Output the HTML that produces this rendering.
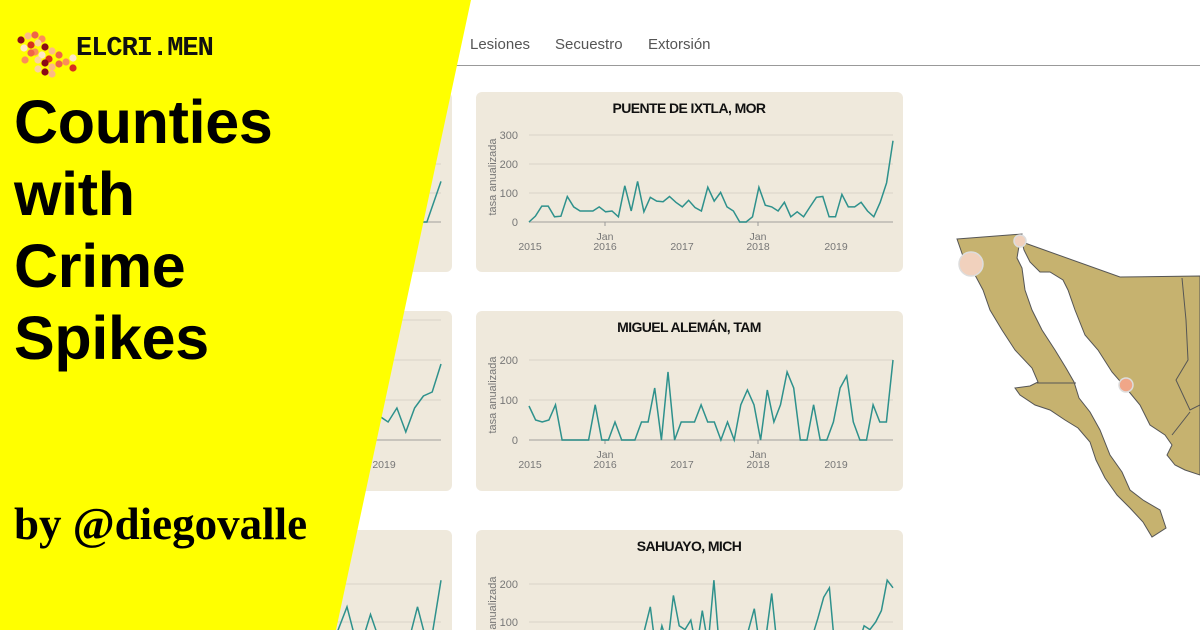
<!DOCTYPE html>
<html><head><meta charset="utf-8"><style>
*{margin:0;padding:0;box-sizing:border-box}
html,body{width:1200px;height:630px;overflow:hidden}
body{background:#fff;position:relative;font-family:"Liberation Sans",sans-serif}
.nav{position:absolute;top:36px;font-size:15px;color:#555}
.hr{position:absolute;left:440px;top:65px;width:760px;height:1px;background:#999}
.card{position:absolute;background:#efe9dc;border-radius:6px}
svg{position:absolute;left:0;top:0}
.yellow{position:absolute;left:0;top:0}
.logo{position:absolute;left:76px;top:34px;font-family:"Liberation Mono",monospace;font-weight:bold;font-size:27px;color:#111;letter-spacing:-1px}
.title{position:absolute;left:14px;top:86px;font-weight:bold;font-size:61px;line-height:72px;color:#000;letter-spacing:-0.3px}
.by{position:absolute;left:14px;top:498px;font-family:"Liberation Serif",serif;font-weight:bold;font-size:45px;color:#000}
</style></head><body>
<div class="nav" style="left:470px">Lesiones</div>
<div class="nav" style="left:555px">Secuestro</div>
<div class="nav" style="left:648px">Extorsión</div>
<div class="hr"></div>
<div class="card" style="left:300px;top:92px;width:152px;height:180px"></div>
<div class="card" style="left:300px;top:311px;width:152px;height:180px"></div>
<div class="card" style="left:300px;top:530px;width:152px;height:100px;border-radius:6px 6px 0 0"></div>
<div class="card" style="left:476px;top:92px;width:427px;height:180px"></div>
<div class="card" style="left:476px;top:311px;width:427px;height:180px"></div>
<div class="card" style="left:476px;top:530px;width:427px;height:100px;border-radius:6px 6px 0 0"></div>
<svg id="ch" width="1200" height="630" font-family="Liberation Sans, sans-serif">
</svg>
<svg width="1200" height="630">
<g fill="#c6b26f" stroke="#555" stroke-width="1">
<path d="M957,239 L1022,234 L1019,246 L1017,258 L1022,268 L1025,290 L1032,310 L1042,330 L1055,350 L1066,368 L1074,382 L1079,398 L1090,412 L1100,430 L1110,455 L1122,472 L1130,490 L1143,500 L1160,510 L1166,528 L1152,537 L1143,522 L1130,508 L1117,495 L1105,478 L1096,460 L1090,442 L1078,428 L1065,420 L1050,410 L1035,405 L1020,395 L1015,388 L1030,386 L1038,382 L1032,368 L1015,350 L1002,330 L990,310 L983,290 L975,275 L965,262 Z"/>
<path d="M1022,242 L1120,277 L1200,276 L1200,475 L1185,470 L1175,465 L1167,455 L1172,445 L1165,435 L1150,425 L1140,405 L1126,388 L1112,372 L1098,350 L1085,335 L1075,310 L1068,290 L1063,280 L1050,272 L1040,272 L1030,262 L1024,250 Z"/>
<path d="M1037,383 L1076,383" fill="none"/>
<path d="M1182,278 L1186,320 L1188,360 L1176,380 L1190,410 L1200,405" fill="none"/>
<path d="M1172,435 L1190,412" fill="none"/>
</g>
<g stroke="#ddd" stroke-width="1.5">
<circle cx="971" cy="264" r="12" fill="#f1d1bd"/>
<circle cx="1020" cy="241" r="6" fill="#f1d1bd"/>
<circle cx="1126" cy="385" r="7" fill="#f0a688"/>
</g>
</svg>
<svg class="yellow" width="1200" height="630"><polygon points="0,0 471,0 336,630 0,630" fill="#ffff00"/></svg>
<svg width="70" height="70" style="left:12px;top:28px" id="logo"></svg>
<div class="logo">ELCRI.MEN</div>
<div class="title">Counties<br>with<br>Crime<br>Spikes</div>
<div class="by">by @diegovalle</div>
<script>
const ch=document.getElementById('ch');
let s='';
function chart(top,title,vals,y0,ppu,ticks,left){
 const x0=left?300:529,x1=left?441:893;
 if(!left)s+=`<text x="689" y="${top+21}" text-anchor="middle" font-size="14" font-weight="bold" fill="#111" letter-spacing="-0.6">${title}</text>`;
 ticks.forEach(t=>{const y=y0-t*ppu;s+=`<line x1="${x0}" x2="${x1}" y1="${y}" y2="${y}" stroke="${t==0?'#c8c4bc':'#d8d3c8'}" stroke-width="${t==0?2:1}"/>`;
  if(!left)s+=`<text x="518" y="${y+4}" text-anchor="end" font-size="11" fill="#777">${t}</text>`;});
 if(!left){s+=`<text transform="translate(496,${y0-45}) rotate(-90)" text-anchor="middle" font-size="11" fill="#777">tasa anualizada</text>`;
  const lab=[[530,'','2015'],[605,'Jan','2016'],[682,'','2017'],[758,'Jan','2018'],[836,'','2019']];
  lab.forEach(l=>{if(l[1])s+=`<text x="${l[0]}" y="${y0+18}" text-anchor="middle" font-size="10.5" fill="#777">${l[1]}</text><line x1="${l[0]}" x2="${l[0]}" y1="${y0}" y2="${y0+4}" stroke="#999"/>`;
   s+=`<text x="${l[0]}" y="${y0+28}" text-anchor="middle" font-size="10.5" fill="#777">${l[2]}</text>`;});}
 const st=(x1-x0)/(vals.length-1);
 s+=`<polyline fill="none" stroke="#2e918c" stroke-width="1.5" points="${vals.map((v,i)=>(x0+i*st).toFixed(1)+','+(y0-v*ppu).toFixed(1)).join(' ')}"/>`;
}
const d1=[0,20,55,55,18,20,88,52,38,38,38,52,35,38,18,125,38,140,35,85,72,70,88,68,52,75,50,38,120,72,102,52,38,0,0,18,120,58,52,38,68,18,35,18,52,85,88,18,18,95,52,52,68,38,18,68,135,280];
const d2=[85,50,45,50,88,0,0,0,0,0,88,0,0,45,0,0,0,45,45,130,0,170,0,45,45,45,88,45,45,0,45,0,88,125,88,0,125,45,88,170,130,0,0,88,0,0,45,130,160,45,0,0,88,45,45,200];
const d3=[40,20,60,30,10,50,20,40,60,30,10,20,50,30,40,20,60,30,10,40,80,140,20,90,40,170,90,80,105,30,130,40,210,20,60,30,40,20,80,135,30,60,175,30,20,40,30,20,40,60,110,165,190,20,50,30,70,40,90,80,100,130,210,190];
chart(92,'PUENTE DE IXTLA, MOR',d1,222,0.29,[0,100,200,300]);
chart(311,'MIGUEL ALEMÁN, TAM',d2,440,0.4,[0,100,200]);
chart(530,'SAHUAYO, MICH',d3,660,0.38,[100,200]);
chart(92,'',[20,40,30,60,40,90,100,140,0,0,140],222,0.29,[0,100,200,300],1);
s+=`<text x="384" y="468" text-anchor="middle" font-size="10.5" fill="#777">2019</text>`;
chart(311,'',[40,60,80,70,75,40,60,30,70,60,45,80,20,80,110,120,190],440,0.4,[0,100,200,300],1);
chart(530,'',[20,40,20,60,140,20,120,30,60,20,140,20,210],660,0.38,[100,200],1);
ch.innerHTML+=s;
const cols=['#8b0a16','#d7301f','#fc8d59','#fdbb84','#fdd49e','#fee8c8','#ef6548'];
const pts=[[6,18],[13,14],[20,13],[27,17],[9,26],[16,23],[23,21],[30,25],[37,29],[44,33],[20,30],[27,33],[34,37],[23,38],[30,41],[37,45],[44,42],[51,40],[58,36],[58,46],[23,47],[30,50],[37,52],[16,31],[10,38]];
let g='';pts.forEach((p,i)=>g+=`<circle cx="${p[0]+3}" cy="${p[1]-6}" r="3.6" fill="${cols[(i*3)%7]}"/>`);
document.getElementById('logo').innerHTML=g;
</script>
</body></html>
